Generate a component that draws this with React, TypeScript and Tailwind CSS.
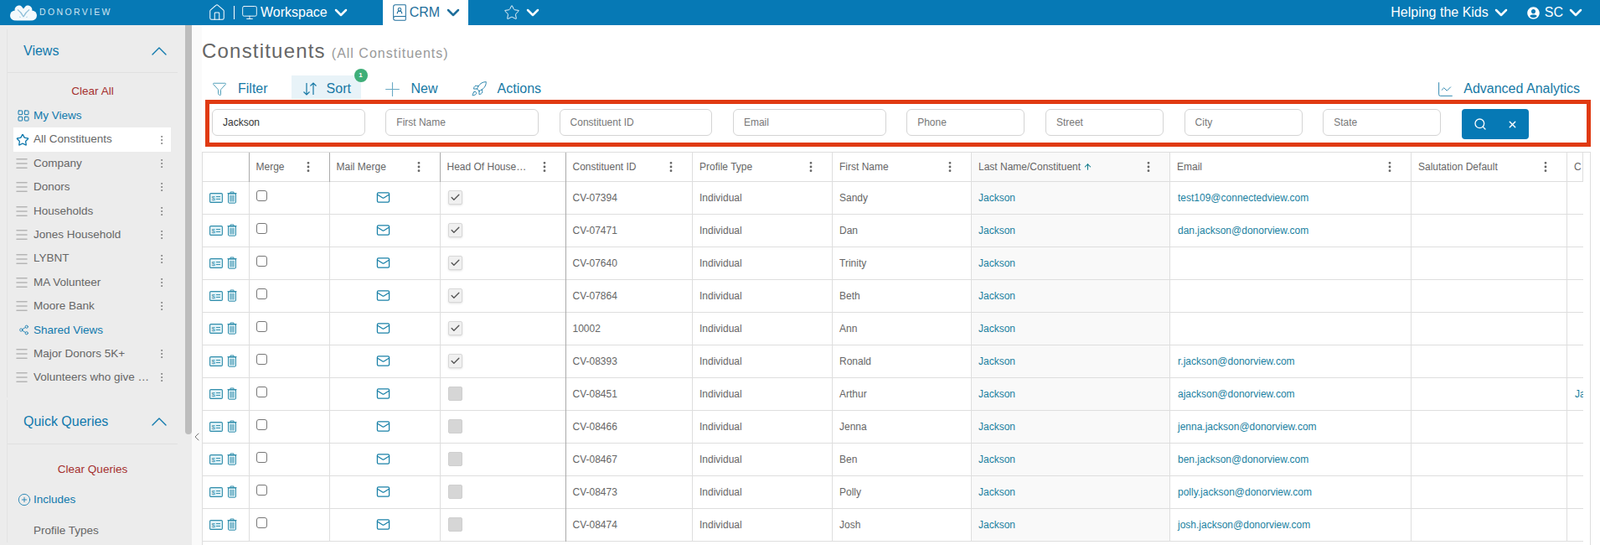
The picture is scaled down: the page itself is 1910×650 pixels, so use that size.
import {
  ArrowUp,
  BookUser,
  Check,
  ChartLine,
  ChevronDown,
  ChevronLeft,
  ChevronUp,
  CirclePlus,
  EllipsisVertical,
  Funnel,
  House,
  LayoutGrid,
  Mail,
  Menu,
  Monitor,
  Plus,
  Rocket,
  Search,
  Share2,
  Star,
  X,
} from "lucide-react";
import { FaUserCircle } from "react-icons/fa";

const views = ["Company", "Donors", "Households", "Jones Household", "LYBNT", "MA Volunteer", "Moore Bank"];
const shared = ["Major Donors 5K+", "Volunteers who give more than once"];

const columns = [
  { label: "", width: 55, dots: false, strong: true },
  { label: "Merge", width: 96, dots: true, strong: true },
  { label: "Mail Merge", width: 132, dots: true, strong: true },
  { label: "Head Of Household", width: 150, dots: true, strong: true },
  { label: "Constituent ID", width: 151.5, dots: true, strong: false },
  { label: "Profile Type", width: 167, dots: true, strong: false },
  { label: "First Name", width: 166, dots: true, strong: false },
  { label: "Last Name/Constituent", width: 237, dots: true, strong: false },
  { label: "Email", width: 288, dots: true, strong: false },
  { label: "Salutation Default", width: 186, dots: true, strong: false },
  { label: "C", width: 19, dots: false, strong: false },
];

const rows = [
  { id: "CV-07394", first: "Sandy", email: "test109@connectedview.com", head: true },
  { id: "CV-07471", first: "Dan", email: "dan.jackson@donorview.com", head: true },
  { id: "CV-07640", first: "Trinity", email: "", head: true },
  { id: "CV-07864", first: "Beth", email: "", head: true },
  { id: "10002", first: "Ann", email: "", head: true },
  { id: "CV-08393", first: "Ronald", email: "r.jackson@donorview.com", head: true },
  { id: "CV-08451", first: "Arthur", email: "ajackson@donorview.com", head: false, extra: "Jackson" },
  { id: "CV-08466", first: "Jenna", email: "jenna.jackson@donorview.com", head: false },
  { id: "CV-08467", first: "Ben", email: "ben.jackson@donorview.com", head: false },
  { id: "CV-08473", first: "Polly", email: "polly.jackson@donorview.com", head: false },
  { id: "CV-08474", first: "Josh", email: "josh.jackson@donorview.com", head: false },
];

function Logo() {
  return (
    <svg width="32" height="19" viewBox="0 0 32 19" className="shrink-0">
      <circle cx="6" cy="12.5" r="6" fill="#f4f9fc" />
      <circle cx="26" cy="12.5" r="6" fill="#f4f9fc" />
      <path d="M16 18 L6.5 8.5 C3 3 10.5 -2 14 2 L16 4.5 L18 2 C21.5 -2 29 3 25.5 8.5 Z" fill="#f4f9fc" />
      <path d="M9 5.5 C12 7.5 14 10 16 14 C18 10 20 7.5 23 5.5" fill="none" stroke="#8fbfd9" strokeWidth="1.3" />
      <rect x="6" y="14.5" width="20" height="4" rx="2" fill="#f4f9fc" />
    </svg>
  );
}

function SortArrows() {
  return (
    <svg width="18" height="18" viewBox="0 0 18 18" className="shrink-0" fill="none" stroke="currentColor" strokeWidth="1.2">
      <path d="M5 2v14M1.5 12.5 5 16l3.5-3.5" />
      <path d="M13 16V2M9.5 5.5 13 2l3.5 3.5" />
    </svg>
  );
}

function CardIcon() {
  return (
    <svg width="16" height="12" viewBox="0 0 16 12" className="shrink-0">
      <rect x="0.6" y="0.6" width="14.8" height="10.8" rx="1.2" fill="#e3f3f8" stroke="#2f8dab" strokeWidth="1.1" />
      <text x="2.4" y="9" fontSize="8" fontFamily="Liberation Sans" fill="#2f8dab">
        $
      </text>
      <path d="M8 4.6h5M8 7.4h5" stroke="#2f8dab" strokeWidth="1" />
    </svg>
  );
}

function TrashIcon() {
  return (
    <svg width="12" height="15" viewBox="0 0 12 15" className="shrink-0">
      <path d="M1.5 3h9v10a1.2 1.2 0 0 1-1.2 1.2H2.7A1.2 1.2 0 0 1 1.5 13Z" fill="#e3f3f8" stroke="#2f8dab" strokeWidth="1" />
      <path d="M0.5 2.6h11M4 2.4V1h4v1.4M4 5v7.4M6 5v7.4M8 5v7.4" fill="none" stroke="#2f8dab" strokeWidth="1" />
    </svg>
  );
}

function SideRow({ label }: { label: string }) {
  return (
    <div className="flex h-[28.4px] items-center pl-[8px] pr-[12px] text-[13.5px] text-[#666]">
      <Menu className="h-[18px] w-[18px] shrink-0 text-[#b5b5b5]" strokeWidth={2} />
      <span className="ml-[5px] w-[141px] truncate">{label}</span>
      <EllipsisVertical className="ml-auto h-[14px] w-[14px] text-[#777]" strokeWidth={1.5} />
    </div>
  );
}

function Sidebar() {
  return (
    <aside className="flex h-[620px] w-[229px] shrink-0 bg-[#ececec]">
      <div className="w-[221px] shrink-0 pl-[8px] pr-[9px] pt-[5px]">
        <div className="border-l border-[#e3e3e3] pb-[9px]">
          <div className="flex h-[52px] items-center justify-between border-b border-[#e0e0e0] pl-[19px] pr-[6px] text-[16px] text-[#1079ad]">
            Views
            <ChevronUp className="h-[32px] w-[32px]" strokeWidth={1} />
          </div>
          <div className="mt-[8px] flex h-[28px] items-center justify-center text-[13.5px] text-[#a5302f]">Clear All</div>
          <div className="mt-px flex h-[28.4px] items-center pl-[11px] text-[13.5px] text-[#1079ad]">
            <LayoutGrid className="h-[16px] w-[16px]" strokeWidth={1.5} />
            <span className="ml-[4px]">My Views</span>
          </div>
          <div className="ml-[7px] mr-[8px] flex h-[28.4px] items-center bg-white pl-[3px] pr-[4px] text-[13.5px] text-[#666]">
            <Star className="h-[16px] w-[16px] shrink-0 text-[#1079ad]" strokeWidth={2} />
            <span className="ml-[5px]">All Constituents</span>
            <EllipsisVertical className="ml-auto h-[14px] w-[14px] text-[#777]" strokeWidth={1.5} />
          </div>
          {views.map((v) => (
            <SideRow key={v} label={v} />
          ))}
          <div className="flex h-[28.4px] items-center pl-[13px] text-[13.5px] text-[#1079ad]">
            <Share2 className="h-[13px] w-[13px]" strokeWidth={1.5} />
            <span className="ml-[5px]">Shared Views</span>
          </div>
          {shared.map((v) => (
            <SideRow key={v} label={v} />
          ))}
        </div>
        <div className="mt-[3px] border-l border-[#e3e3e3]">
          <div className="flex h-[53px] items-center justify-between border-b border-[#e0e0e0] pl-[19px] pr-[6px] text-[16px] text-[#1079ad]">
            Quick Queries
            <ChevronUp className="h-[32px] w-[32px]" strokeWidth={1} />
          </div>
          <div className="mt-[16px] flex h-[28px] items-center justify-center text-[13.5px] text-[#a5302f]">Clear Queries</div>
          <div className="mt-[8px] flex h-[28px] items-center pl-[12px] text-[13.5px] text-[#1079ad]">
            <CirclePlus className="h-[16px] w-[16px]" strokeWidth={1.25} />
            <span className="ml-[3px]">Includes</span>
          </div>
          <div className="mt-[9px] flex h-[28px] items-center pl-[31px] text-[13.5px] text-[#666]">Profile Types</div>
        </div>
      </div>
      <div className="h-[488px] w-[8px] shrink-0 rounded-b-[4px] bg-[#bdbdbd]" />
    </aside>
  );
}

function TopBar() {
  return (
    <header className="flex h-[30px] items-center bg-[#0679b5] text-[16px] text-white">
      <div className="flex w-[248px] items-center pl-[12px]">
        <Logo />
        <span className="ml-[3px] text-[10.5px] tracking-[2.35px] text-[#cfe6f2]">DONORVIEW</span>
      </div>
      <House className="h-[22px] w-[22px]" strokeWidth={1.1} />
      <span className="ml-[9px] h-[16px] w-px bg-white" />
      <Monitor className="ml-[8px] h-[20px] w-[20px]" strokeWidth={1.1} />
      <span className="ml-[3px]">Workspace</span>
      <ChevronDown className="ml-[4px] h-[24px] w-[24px]" strokeWidth={2.5} />
      <div className="ml-[38px] flex h-full w-[102px] items-center bg-white pl-[9px] text-[#1f6f9c]">
        <BookUser className="h-[22px] w-[22px]" strokeWidth={1.1} />
        <span className="ml-px">CRM</span>
        <ChevronDown className="ml-[4px] h-[24px] w-[24px]" strokeWidth={2.5} />
      </div>
      <Star className="ml-[42px] h-[20px] w-[20px]" strokeWidth={1.1} />
      <ChevronDown className="ml-[3px] h-[24px] w-[24px]" strokeWidth={2.5} />
      <div className="ml-auto flex items-center pr-[17px]">
        <span>Helping the Kids</span>
        <ChevronDown className="ml-[3px] h-[24px] w-[24px]" strokeWidth={2.5} />
        <FaUserCircle className="ml-[19px] h-[15px] w-[15px]" />
        <span className="ml-[6px]">SC</span>
        <ChevronDown className="ml-[3px] h-[24px] w-[24px]" strokeWidth={2.5} />
      </div>
    </header>
  );
}

function Toolbar() {
  return (
    <div className="mt-[18px] flex h-[28px] items-center pt-[4px] text-[16px] text-[#1779a5]">
      <Funnel className="ml-[12px] h-[18px] w-[18px] text-[#2f8dab]" strokeWidth={1.1} />
      <span className="ml-[13px]">Filter</span>
      <div className="relative -mt-[4px] ml-[28px] flex h-[28px] w-[83px] items-center bg-[#e8f3f8] pl-[13px] pt-[4px]">
        <SortArrows />
        <span className="ml-[11px]">Sort</span>
        <span className="absolute -right-[8px] -top-[8px] flex h-[16px] w-[16px] items-center justify-center rounded-full bg-[#3fae78] text-[8px] font-bold text-white">
          1
        </span>
      </div>
      <Plus className="ml-[24px] h-[27px] w-[27px] text-[#6aa9c4]" strokeWidth={1} />
      <span className="ml-[9px]">New</span>
      <Rocket className="ml-[39px] h-[20px] w-[20px]" strokeWidth={1.1} />
      <span className="ml-[12px]">Actions</span>
      <div className="ml-auto flex items-center pr-[24px]">
        <ChartLine className="h-[21px] w-[21px]" strokeWidth={1} />
        <span className="ml-[11px]">Advanced Analytics</span>
      </div>
    </div>
  );
}

function Field({ label, value, wide }: { label: string; value?: string; wide?: boolean }) {
  return (
    <input
      readOnly
      value={value ?? ""}
      placeholder={label}
      className={`h-[32px] shrink-0 rounded-[6px] border border-[#d4d4d4] bg-white pl-[12px] text-[12px] text-[#333] outline-none placeholder:text-[#777] ${
        wide ? "w-[182.8px]" : "w-[141.2px]"
      }`}
    />
  );
}

function SearchBar() {
  return (
    <div className="ml-[4px] mt-px flex h-[56px] w-[1654px] items-start gap-[24.5px] border-[5px] border-[#e03a12] pl-[3px] pt-[6px]">
      <Field label="Last Name" value="Jackson" wide />
      <Field label="First Name" wide />
      <Field label="Constituent ID" wide />
      <Field label="Email" wide />
      <Field label="Phone" />
      <Field label="Street" />
      <Field label="City" />
      <Field label="State" />
      <div className="flex h-[36px] w-[80px] shrink-0 items-center rounded-[4px] bg-[#0679b5] pl-[14px] text-white">
        <Search className="h-[16px] w-[16px]" strokeWidth={2} />
        <X className="ml-[24px] h-[13px] w-[13px]" strokeWidth={2.5} />
      </div>
    </div>
  );
}

function ConstituentTable() {
  return (
    <div className="mt-[6px] h-[470px] w-[1658px] overflow-hidden border-x border-t border-[#dedede]">
      <table className="w-[1648px] table-fixed border-collapse text-[12px] text-[#666]">
        <colgroup>
          {columns.map((c) => (
            <col key={c.label} style={{ width: c.width }} />
          ))}
        </colgroup>
        <thead>
          <tr className="h-[34px] border-b border-[#dedede]">
            {columns.map((c, i) => (
              <th
                key={c.label}
                className={`border-r p-0 text-left font-normal ${c.strong ? "border-[#aaa]" : "border-[#dedede]"} ${
                  i === 7 ? "bg-[#f9f9f9]" : ""
                }`}
              >
                {c.label && (
                  <div className="flex items-center pl-[8px] pr-[17px]">
                    <span className={i === 3 ? "w-[100px] truncate" : "whitespace-nowrap"}>{c.label}</span>
                    {i === 7 && <ArrowUp className="ml-[3px] h-[12px] w-[11px] text-[#0d7a8a]" strokeWidth={2.25} />}
                    {c.dots && <EllipsisVertical className="ml-auto h-[16px] w-[16px] text-[#666]" strokeWidth={2.25} />}
                  </div>
                )}
              </th>
            ))}
          </tr>
        </thead>
        <tbody>
          {rows.map((r) => (
            <tr key={r.id} className="h-[39px] border-b border-[#dedede]">
              <td className="border-r border-[#dedede] p-0">
                <div className="flex items-center gap-[5px] pl-[8px]">
                  <CardIcon />
                  <TrashIcon />
                </div>
              </td>
              <td className="border-r border-[#dedede] p-0 pl-[8px]">
                <div className="-mt-[4px] h-[13px] w-[13px] rounded-[3px] border border-[#777] bg-white" />
              </td>
              <td className="border-r border-[#dedede] p-0">
                <Mail className="ml-[55px] h-[17px] w-[17px] text-[#1a81a8]" strokeWidth={1.75} />
              </td>
              <td className="border-r border-[#aaa] p-0 pl-[9px]">
                {r.head ? (
                  <div className="flex h-[17px] w-[17px] items-center justify-center rounded-[2px] border border-[#d8d8d8] bg-[#f0f0f0] shadow-sm">
                    <Check className="h-[13px] w-[13px] text-[#555]" strokeWidth={2.5} />
                  </div>
                ) : (
                  <div className="h-[17px] w-[17px] rounded-[2px] border border-[#cfcfcf] bg-[#d6d6d6]" />
                )}
              </td>
              <td className="border-r border-[#dedede] p-0 pl-[8px]">{r.id}</td>
              <td className="border-r border-[#dedede] p-0 pl-[8px]">Individual</td>
              <td className="border-r border-[#dedede] p-0 pl-[8px]">{r.first}</td>
              <td className="border-r border-[#dedede] bg-[#f9f9f9] p-0 pl-[8px] text-[#1a7f9f]">Jackson</td>
              <td className="border-r border-[#dedede] p-0 pl-[9px] text-[#1a7f9f]">{r.email}</td>
              <td className="border-r border-[#dedede] p-0" />
              <td className="overflow-hidden p-0 pl-[9px] whitespace-nowrap text-[#1a7f9f]">{r.extra}</td>
            </tr>
          ))}
        </tbody>
      </table>
    </div>
  );
}

export default function App() {
  return (
    <div className="h-[650px] w-[1910px] overflow-hidden bg-white font-['Liberation_Sans',Arial,sans-serif]">
      <TopBar />
      <div className="flex">
        <Sidebar />
        <div className="w-[12px] shrink-0 bg-[#fafafa] pt-[483px]">
          <ChevronLeft className="-ml-[2px] h-[16px] w-[16px] text-[#777]" strokeWidth={1.5} />
        </div>
        <main className="min-w-0 flex-1">
          <div className="mt-[13px] flex h-[28px] items-baseline text-[#666]">
            <h1 className="text-[24px] tracking-[1.2px]">Constituents</h1>
            <span className="ml-[7px] text-[16px] tracking-[1px] text-[#999]">(All Constituents)</span>
          </div>
          <div className="h-px" />
          <Toolbar />
          <SearchBar />
          <ConstituentTable />
        </main>
      </div>
    </div>
  );
}
